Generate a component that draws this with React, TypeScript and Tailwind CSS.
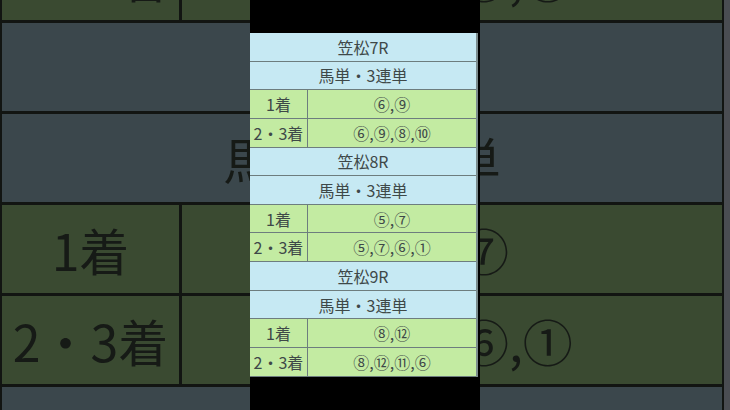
const FONT = { fontFamily: '"Noto Sans CJK JP", "Noto Sans", sans-serif' };

type Race = { name: string; first: string; second: string };

const races: Race[] = [
  { name: "笠松7R", first: "⑥,⑨", second: "⑥,⑨,⑧,⑩" },
  { name: "笠松8R", first: "⑤,⑦", second: "⑤,⑦,⑥,①" },
  { name: "笠松9R", first: "⑧,⑫", second: "⑧,⑫,⑪,⑥" },
];

function BgRow({ kind, left, right }: { kind: "blue" | "green"; left?: string; right: string }) {
  const bg = kind === "blue" ? "bg-[#3b474c]" : "bg-[#3a4a31]";
  if (!left) {
    return (
      <div className={`flex h-[91px] shrink-0 items-center justify-center border-b-[3px] border-[#121512] text-[50px] text-[#161a16] ${bg}`}>
        {right}
      </div>
    );
  }
  return (
    <div className={`flex h-[91px] shrink-0 border-b-[3px] border-[#121512] text-[50px] text-[#161a16] ${bg}`}>
      <div className="flex w-[180px] shrink-0 items-center justify-center border-r-[3px] border-[#121512]">{left}</div>
      <div className="flex flex-1 items-center justify-center">{right}</div>
    </div>
  );
}

function Row({ kind, left, right }: { kind: "blue" | "green"; left?: string; right: string }) {
  const bg = kind === "blue" ? "bg-[#c6e9f3]" : "bg-[#c3eba2]";
  return (
    <div className={`flex h-[28.65px] shrink-0 border-b border-[#6d7d7e] text-[16px] leading-none text-[#3e4848] ${bg}`}>
      {left && (
        <div className="flex w-[58px] shrink-0 items-center justify-center border-r border-[#6d7d7e]">{left}</div>
      )}
      <div className="flex flex-1 items-center justify-center">{right}</div>
    </div>
  );
}

export default function App() {
  return (
    <div className="relative h-[410px] w-[730px] overflow-hidden bg-[#4a4d52]" style={FONT}>
      <div className="-mt-[68px] ml-[0px] flex w-[724px] flex-col border-x-[2px] border-[#121512]">
        <BgRow kind="green" left="2・3着" right="⑥,⑨,⑧,⑩" />
        <BgRow kind="blue" right="笠松8R" />
        <BgRow kind="blue" right="馬単・3連単" />
        <BgRow kind="green" left="1着" right="⑤,⑦" />
        <BgRow kind="green" left="2・3着" right="⑤,⑦,⑥,①" />
        <BgRow kind="blue" right="笠松9R" />
      </div>

      <div className="absolute left-[250px] top-0 flex h-full w-[230px] flex-col bg-black pt-[33px]">
        <div className="flex w-[228px] flex-col border-r-2 border-[#7b8b8d]">
          {races.map((r) => (
            <div key={r.name} className="flex flex-col">
              <Row kind="blue" right={r.name} />
              <Row kind="blue" right="馬単・3連単" />
              <Row kind="green" left="1着" right={r.first} />
              <Row kind="green" left="2・3着" right={r.second} />
            </div>
          ))}
        </div>
      </div>
    </div>
  );
}
